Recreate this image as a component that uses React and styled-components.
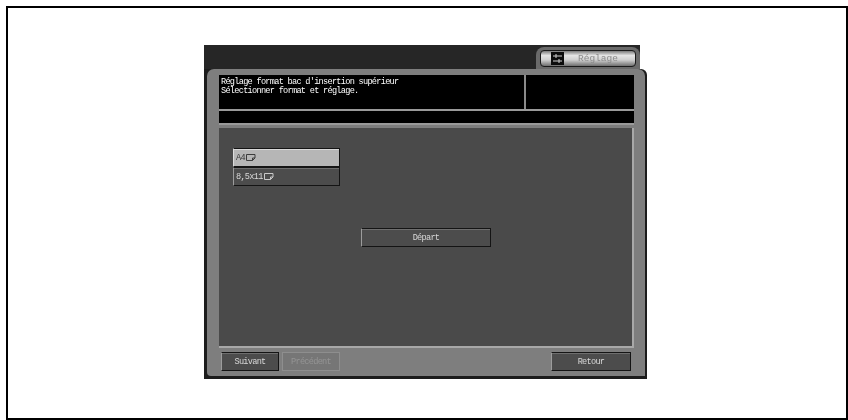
import React from 'react';
import styled, { createGlobalStyle } from 'styled-components';

const Global = createGlobalStyle`
  html, body { margin: 0; padding: 0; background: #fff; }
  body { font-family: "Liberation Mono", "DejaVu Sans Mono", monospace; }
`;

const Frame = styled.div`
  box-sizing: border-box;
  width: 842px;
  height: 414px;
  margin: 6px 0 0 6px;
  border: 2px solid #000;
  padding: 37px 0 0 196px;
`;

const Device = styled.div`
  width: 443px;
  display: flex;
  flex-direction: column;
  filter: blur(0.35px);
`;

const TopBar = styled.div`
  box-sizing: border-box;
  height: 24px;
  margin-right: 7px;
  background: #262626;
  display: flex;
  justify-content: flex-end;
  align-items: flex-end;
`;

const Tab = styled.div`
  box-sizing: border-box;
  width: 104px;
  height: 22px;
  padding: 3px 4px 2px;
  background: #6a6a6a;
  border-radius: 8px 8px 0 0;
`;

const TabButton = styled.div`
  box-sizing: border-box;
  height: 17px;
  border-radius: 4px;
  border: 1px solid #1a1a1a;
  background: linear-gradient(#7c7c7c 0%, #e4e4e4 30%, #cfcfcf 60%, #6e6e6e 100%);
  display: flex;
  align-items: center;
  padding-left: 10px;
  gap: 14px;
`;

const TabIcon = styled.svg`
  width: 13px;
  height: 13px;
  display: block;
`;

const TabLabel = styled.span`
  font-size: 9.5px;
  letter-spacing: 0;
  color: #8c8c8c;
`;

const Body = styled.div`
  box-sizing: border-box;
  height: 310px;
  padding: 0 2px 3px 3px;
  background: #1c1c1c;
  border-radius: 0 6px 0 0;
`;

const Panel = styled.div`
  box-sizing: border-box;
  height: 100%;
  padding: 6px 11px 0 12px;
  background: #7e7e7e;
  border-radius: 7px 7px 0 4px;
`;

const MessageRow = styled.div`
  display: flex;
  height: 34px;
  background: #000;
  border-bottom: 2px solid #9a9a9a;
`;

const MessageText = styled.div`
  flex: 1;
  padding: 3px 0 0 2px;
  border-right: 2px solid #8a8a8a;
  color: #fff;
  font-size: 8.6px;
  letter-spacing: -0.72px;
  line-height: 9px;
  white-space: pre;
`;

const MessageSide = styled.div`
  width: 108px;
`;

const Strip = styled.div`
  height: 12px;
  background: #000;
  border-bottom: 2px solid #9a9a9a;
`;

const Main = styled.div`
  box-sizing: border-box;
  height: 220px;
  margin-top: 3px;
  padding: 20px 0 0 14px;
  background: #4a4a4a;
  border-right: 2px solid #a8a8a8;
  border-bottom: 2px solid #a8a8a8;
`;

const Button = styled.div`
  box-sizing: border-box;
  display: flex;
  align-items: center;
  height: 19px;
  width: ${p => p.$w}px;
  justify-content: ${p => (p.$left ? 'flex-start' : 'center')};
  padding-left: ${p => (p.$left ? 2 : 0)}px;
  background: ${p => (p.$active ? '#b6b6b6' : '#4c4c4c')};
  border: 1px solid #141414;
  border-left-color: ${p => (p.$active ? '#dcdcdc' : '#9c9c9c')};
  box-shadow: inset 0 1px 0 ${p => (p.$active ? '#d8d8d8' : '#6e6e6e')};
  color: ${p => (p.$active ? '#3a3a3a' : '#d8d8d8')};
  font-size: 8.6px;
  letter-spacing: -0.72px;
`;

const DisabledButton = styled.div`
  box-sizing: border-box;
  display: flex;
  align-items: center;
  justify-content: center;
  width: 58px;
  height: 19px;
  background: #767676;
  border: 1px solid #8e8e8e;
  color: #949494;
  font-size: 8.6px;
  letter-spacing: -0.72px;
`;

const PaperIcon = styled.svg`
  width: 10px;
  height: 7px;
  margin-left: 1px;
  display: block;
`;

const StartButton = styled(Button)`
  margin: 42px 0 0 128px;
`;

const Footer = styled.div`
  display: flex;
  align-items: center;
  padding: 4px 3px 0 2px;
`;

const FooterLeft = styled.div`
  display: flex;
  gap: 3px;
  flex: 1;
`;

const Paper = ({ color }) => (
  <PaperIcon viewBox="0 0 10 7">
    <path d="M.5.5h8.5v3.5l-2.5 2.5h-6z M6.5 6.5v-2.5h2.5" fill="none" stroke={color} />
  </PaperIcon>
);

export default function App() {
  return (
    <>
      <Global />
      <Frame>
        <Device>
          <TopBar>
            <Tab>
              <TabButton>
                <TabIcon viewBox="0 0 13 13">
                  <rect width="13" height="13" fill="#0c0c0c" />
                  <path d="M2 4h9M2 9h9M5 2v4M8 7v4" stroke="#cfcfcf" fill="none" />
                </TabIcon>
                <TabLabel>Réglage</TabLabel>
              </TabButton>
            </Tab>
          </TopBar>
          <Body>
            <Panel>
              <MessageRow>
                <MessageText>{"Réglage format bac d'insertion supérieur\nSélectionner format et réglage."}</MessageText>
                <MessageSide />
              </MessageRow>
              <Strip />
              <Main>
                <Button $w={107} $left $active>A4<Paper color="#3c3c3c" /></Button>
                <Button $w={107} $left>8,5x11<Paper color="#c8c8c8" /></Button>
                <StartButton $w={130}>Départ</StartButton>
              </Main>
              <Footer>
                <FooterLeft>
                  <Button $w={58}>Suivant</Button>
                  <DisabledButton>Précédent</DisabledButton>
                </FooterLeft>
                <Button $w={80}>Retour</Button>
              </Footer>
            </Panel>
          </Body>
        </Device>
      </Frame>
    </>
  );
}
